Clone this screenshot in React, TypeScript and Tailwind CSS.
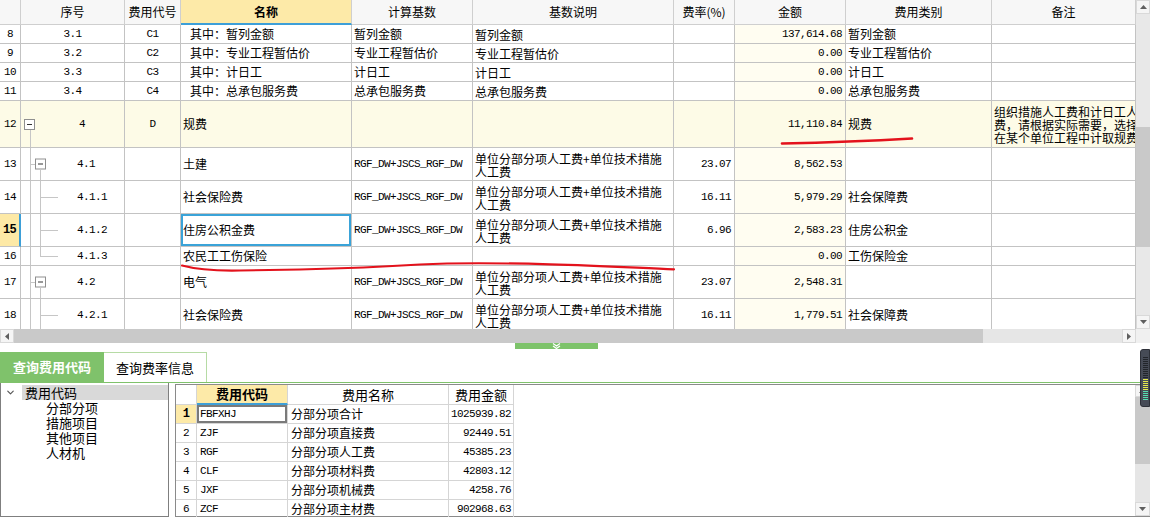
import clsx from 'clsx';
import { ChevronDown } from 'lucide-react';
import type { ReactNode } from 'react';

type TreeKind = 'root' | 'branch' | 'leaf' | 'last';

type FeeRow = {
  n: string;
  seq: string;
  code?: string;
  name: string;
  base?: string;
  desc?: string[];
  rate?: string;
  amt: string;
  cat?: string;
  note?: string[];
  h: string;
  tree?: TreeKind;
  sub?: boolean;
  sel?: boolean;
  hl?: boolean;
};

const mono = "font-['Liberation_Mono',monospace] text-[11px] tracking-[-0.6px]";
const W = ['w-[21px]', 'w-[104px]', 'w-[56px]', 'w-[171px]', 'w-[121px]', 'w-[201px]', 'w-[61px]', 'w-[111px]', 'w-[146px]', 'w-[144px]'];

const RGF = 'RGF_DW+JSCS_RGF_DW';
const DESC = ['单位分部分项人工费+单位技术措施', '人工费'];

const rows: FeeRow[] = [
  { n: '8', seq: '3.1', code: 'C1', name: '其中：暂列金额', base: '暂列金额', desc: ['暂列金额'], amt: '137,614.68', cat: '暂列金额', h: 'h-[19px]', sub: true },
  { n: '9', seq: '3.2', code: 'C2', name: '其中：专业工程暂估价', base: '专业工程暂估价', desc: ['专业工程暂估价'], amt: '0.00', cat: '专业工程暂估价', h: 'h-[19px]', sub: true },
  { n: '10', seq: '3.3', code: 'C3', name: '其中：计日工', base: '计日工', desc: ['计日工'], amt: '0.00', cat: '计日工', h: 'h-[19px]', sub: true },
  { n: '11', seq: '3.4', code: 'C4', name: '其中：总承包服务费', base: '总承包服务费', desc: ['总承包服务费'], amt: '0.00', cat: '总承包服务费', h: 'h-[19px]', sub: true },
  {
    n: '12', seq: '4', code: 'D', name: '规费', amt: '11,110.84', cat: '规费', h: 'h-[47px]', tree: 'root', hl: true,
    note: ['组织措施人工费和计日工人', '费，请根据实际需要，选择', '在某个单位工程中计取规费'],
  },
  { n: '13', seq: '4.1', name: '土建', base: RGF, desc: DESC, rate: '23.07', amt: '8,562.53', h: 'h-[33px]', tree: 'branch' },
  { n: '14', seq: '4.1.1', name: '社会保险费', base: RGF, desc: DESC, rate: '16.11', amt: '5,979.29', cat: '社会保障费', h: 'h-[33px]', tree: 'leaf' },
  { n: '15', seq: '4.1.2', name: '住房公积金费', base: RGF, desc: DESC, rate: '6.96', amt: '2,583.23', cat: '住房公积金', h: 'h-[33px]', tree: 'leaf', sel: true },
  { n: '16', seq: '4.1.3', name: '农民工工伤保险', amt: '0.00', cat: '工伤保险金', h: 'h-[19px]', tree: 'last' },
  { n: '17', seq: '4.2', name: '电气', base: RGF, desc: DESC, rate: '23.07', amt: '2,548.31', h: 'h-[33px]', tree: 'branch' },
  { n: '18', seq: '4.2.1', name: '社会保险费', base: RGF, desc: DESC, rate: '16.11', amt: '1,779.51', cat: '社会保障费', h: 'h-[33px]', tree: 'leaf' },
];

const codes = [
  ['1', 'FBFXHJ', '分部分项合计', '1025939.82'],
  ['2', 'ZJF', '分部分项直接费', '92449.51'],
  ['3', 'RGF', '分部分项人工费', '45385.23'],
  ['4', 'CLF', '分部分项材料费', '42803.12'],
  ['5', 'JXF', '分部分项机械费', '4258.76'],
  ['6', 'ZCF', '分部分项主材费', '902968.63'],
];

const Cell = ({ w, className, children }: { w: string; className?: string; children?: ReactNode }) => (
  <div className={clsx('relative shrink-0 h-full flex items-center overflow-hidden whitespace-nowrap border-r border-b border-[#c3c3c3]', w, className)}>
    {children}
  </div>
);

const Box = ({ className }: { className: string }) => (
  <div className={clsx('absolute w-[11px] h-[11px] border border-[#8f8f8f] bg-white flex items-center justify-center', className)}>
    <div className="w-[5px] h-px bg-[#333]" />
  </div>
);

const Tree = ({ kind }: { kind: TreeKind }) => {
  const ln = 'absolute bg-[#c6c6c6]';
  if (kind === 'root')
    return (
      <>
        <Box className="left-[3px] top-[18px]" />
        <div className={clsx(ln, 'left-[9px] w-px top-[29px] bottom-0')} />
      </>
    );
  if (kind === 'branch')
    return (
      <>
        <div className={clsx(ln, 'left-[9px] w-px top-0 bottom-0')} />
        <div className={clsx(ln, 'left-[9px] w-[5px] h-px top-1/2')} />
        <Box className="left-[14px] top-1/2 -translate-y-1/2" />
        <div className={clsx(ln, 'left-[19px] w-px top-[calc(50%+6px)] bottom-0')} />
      </>
    );
  return (
    <>
      <div className={clsx(ln, 'left-[9px] w-px top-0 bottom-0')} />
      <div className={clsx(ln, 'left-[19px] w-px top-0', kind === 'last' ? 'h-1/2' : 'bottom-0')} />
      <div className={clsx(ln, 'left-[19px] w-[18px] h-px top-1/2')} />
    </>
  );
};

const Arrow = ({ dir, className }: { dir: 'up' | 'down' | 'left' | 'right'; className?: string }) => {
  const d = {
    up: 'M0 4 L3.5 0 L7 4Z',
    down: 'M0 0 L7 0 L3.5 4Z',
    left: 'M4 0 L4 7 L0 3.5Z',
    right: 'M0 0 L4 3.5 L0 7Z',
  }[dir];
  const vert = dir === 'up' || dir === 'down';
  return (
    <div className={clsx('shrink-0 flex items-center justify-center bg-[#f5f5f5] border border-[#d9d9d9]', className)}>
      <svg width={vert ? 7 : 4} height={vert ? 4 : 7}>
        <path d={d} fill="#5f5f5f" />
      </svg>
    </div>
  );
};

const FeeLine = ({ r }: { r: FeeRow }) => (
  <div className={clsx('flex', r.h, r.hl ? 'bg-[#fdfbe7]' : 'bg-white')}>
    <Cell w={W[0]} className={clsx('justify-center', mono, r.sel && 'bg-[#fde9a6] font-bold text-[12px] border-r-2 border-r-[#3d9fd8]')}>
      {r.n}
    </Cell>
    <Cell w={W[1]} className={clsx(mono, r.tree ? (r.tree === 'root' ? 'pl-[58px]' : 'pl-[56px]') : 'justify-center')}>
      {r.tree && <Tree kind={r.tree} />}
      {r.seq}
    </Cell>
    <Cell w={W[2]} className={clsx('justify-center', mono)}>{r.code}</Cell>
    <Cell w={W[3]} className={r.sub ? 'pl-[9px]' : 'pl-[2px]'}>
      {r.name}
      {r.sel && <div className="absolute inset-0 border-2 border-[#3aa3d8]" />}
    </Cell>
    <Cell w={W[4]} className={clsx('pl-[2px]', r.base === RGF && mono)}>{r.base}</Cell>
    <Cell w={W[5]} className="pl-[2px]">
      {r.desc && (
        <div className="flex flex-col leading-[13px] pt-[1px]">
          {r.desc.map((t) => (
            <span key={t}>{t}</span>
          ))}
        </div>
      )}
    </Cell>
    <Cell w={W[6]} className={clsx('justify-end pr-[3px]', mono)}>{r.rate}</Cell>
    <Cell w={W[7]} className={clsx('justify-end pr-[3px]', mono, !r.hl && 'bg-[#fffdf1]')}>{r.amt}</Cell>
    <Cell w={W[8]} className="pl-[2px]">{r.cat}</Cell>
    <Cell w={W[9]} className="pl-[2px]">
      {r.note && (
        <div className="flex flex-col leading-[13px] pt-[1px]">
          {r.note.map((t) => (
            <span key={t}>{t}</span>
          ))}
        </div>
      )}
    </Cell>
  </div>
);

const heads = ['', '序号', '费用代号', '名称', '计算基数', '基数说明', '费率(%)', '金额', '费用类别', '备注'];

export default function App() {
  return (
    <div className="relative w-[1150px] h-[517px] overflow-hidden bg-white text-[12px] leading-[14px] text-black font-['Noto_Sans_CJK_SC',sans-serif]">
      {/* upper fee grid */}
      <div className="flex h-[329px]">
        <div className="w-[1136px] overflow-hidden">
          <div className="flex h-[25px] bg-[#f7f7f7]">
            {heads.map((h, i) => (
              <Cell
                key={i}
                w={W[i]}
                className={clsx('justify-center border-[#cfcfcf]', i === 3 && 'bg-[#fdeaa8] font-bold border-b-2 border-b-[#3d9fd8]')}
              >
                {h}
              </Cell>
            ))}
          </div>
          {rows.map((r) => (
            <FeeLine key={r.n} r={r} />
          ))}
        </div>
        <div className="w-[14px] h-full flex flex-col bg-[#e8e8e8]">
          <Arrow dir="up" className="h-[14px]" />
          <div className="h-[113px]" />
          <div className="h-[120px] bg-[#c9c9c9]" />
          <div className="flex-1" />
          <Arrow dir="down" className="h-[14px]" />
        </div>
      </div>

      {/* horizontal scrollbar */}
      <div className="flex h-[14px]">
        <Arrow dir="left" className="w-[14px]" />
        <div className="w-[969px] bg-[#c9c9c9]" />
        <div className="flex-1 bg-[#e6e6e6]" />
        <Arrow dir="right" className="w-[14px]" />
        <div className="w-[14px] bg-[#f0f0f0]" />
      </div>

      {/* splitter handle */}
      <div className="h-[9px] pl-[515px]">
        <div className="w-[83px] h-[6px] bg-[#7dc36a] flex items-start justify-center">
          <svg width="9" height="6" viewBox="0 0 9 6">
            <path d="M1 0.5 L4.5 3 L8 0.5 M1 3 L4.5 5.5 L8 3" stroke="white" strokeWidth="1.2" fill="none" />
          </svg>
        </div>
      </div>

      {/* tabs */}
      <div className="flex h-[30px]">
        <div className="w-[104px] bg-[#7fc26b] text-white font-bold text-[13px] flex items-center justify-center">查询费用代码</div>
        <div className="w-[103px] border-t border-r border-[#b6dba5] flex items-center justify-center text-[13px]">查询费率信息</div>
      </div>
      <div className="h-px bg-[#7fc26b]" />

      {/* lower panels */}
      <div className="flex h-[134px]">
        <div className="w-[169px] h-full border-x border-b border-[#7f7f7f] pt-[2px] text-[13px] leading-[15px]">
          <div className="flex items-center h-[15px]">
            <ChevronDown size={11} strokeWidth={2.5} className="ml-[4px] mr-[6px] text-[#555]" />
            <div className="flex-1 h-full bg-[#d9d9d9] pl-[3px]">费用代码</div>
          </div>
          {['分部分项', '措施项目', '其他项目', '人材机'].map((t) => (
            <div key={t} className="pl-[45px] h-[15px]">{t}</div>
          ))}
        </div>
        <div className="ml-[6px] mt-px flex-1 flex border-t border-l border-b border-[#8a8a8a]">
          <div className="flex-1">
            <div className="flex h-[20px]">
              <Cell w="w-[21px]" className="border-[#d5d5d5]" />
              <Cell w="w-[91px]" className="justify-center border-[#d5d5d5] bg-[#fdeaa8] font-bold text-[13px] border-b-2 border-b-[#3d9fd8]">费用代码</Cell>
              <Cell w="w-[161px]" className="justify-center border-[#d5d5d5] text-[13px]">费用名称</Cell>
              <Cell w="w-[65px]" className="justify-center border-[#d5d5d5] text-[13px]">费用金额</Cell>
            </div>
            {codes.map(([n, c, name, v], i) => (
              <div key={n} className="flex h-[19px]">
                <Cell w="w-[21px]" className={clsx('justify-center border-[#d5d5d5]', mono, i === 0 && 'bg-[#fdeaa8] font-bold text-[12px]')}>{n}</Cell>
                <Cell w="w-[91px]" className={clsx('pl-[3px] border-[#d5d5d5]', mono)}>
                  {c}
                  {i === 0 && <div className="absolute inset-0 border-2 border-[#7a7a7a]" />}
                </Cell>
                <Cell w="w-[161px]" className="pl-[3px] border-[#d5d5d5]">{name}</Cell>
                <Cell w="w-[65px]" className={clsx('justify-end pr-[2px] border-[#d5d5d5]', mono)}>{v}</Cell>
              </div>
            ))}
          </div>
          <div className="w-[15px] h-full flex flex-col bg-[#e6e6e6]">
            <Arrow dir="up" className="h-[12px]" />
            <div className="h-[67px] bg-[#c9c9c9]" />
            <div className="flex-1" />
            <Arrow dir="down" className="h-[14px]" />
          </div>
        </div>
      </div>

      {/* floating level meter */}
      <div className="absolute right-0 top-[349px] w-[10px] h-[58px] rounded-l-[3px] bg-[#464b56] border border-[#2d3038] flex flex-col items-center pt-[7px] gap-px">
        {Array.from({ length: 22 }).map((_, i) => (
          <div key={i} className={clsx('w-[5px] h-px', i < 11 ? 'bg-[#22252b]' : i < 17 ? 'bg-[#e4e84c]' : 'bg-[#55e0b0]')} />
        ))}
      </div>

      {/* red hand-drawn marks */}
      <svg className="absolute inset-0 pointer-events-none" width="1150" height="517">
        <path d="M782 143.5 Q 850 142 912 138.5" stroke="#e3121c" strokeWidth="2.6" fill="none" strokeLinecap="round" />
        <path
          d="M182 265.5 C 195 269, 215 271, 240 270.5 L 300 269.5 C 340 268.5, 380 267, 420 264.5 C 450 263, 500 263, 550 264.3 C 600 265.5, 640 268, 674 269.3"
          stroke="#e3121c"
          strokeWidth="2.2"
          fill="none"
          strokeLinecap="round"
        />
      </svg>
    </div>
  );
}
